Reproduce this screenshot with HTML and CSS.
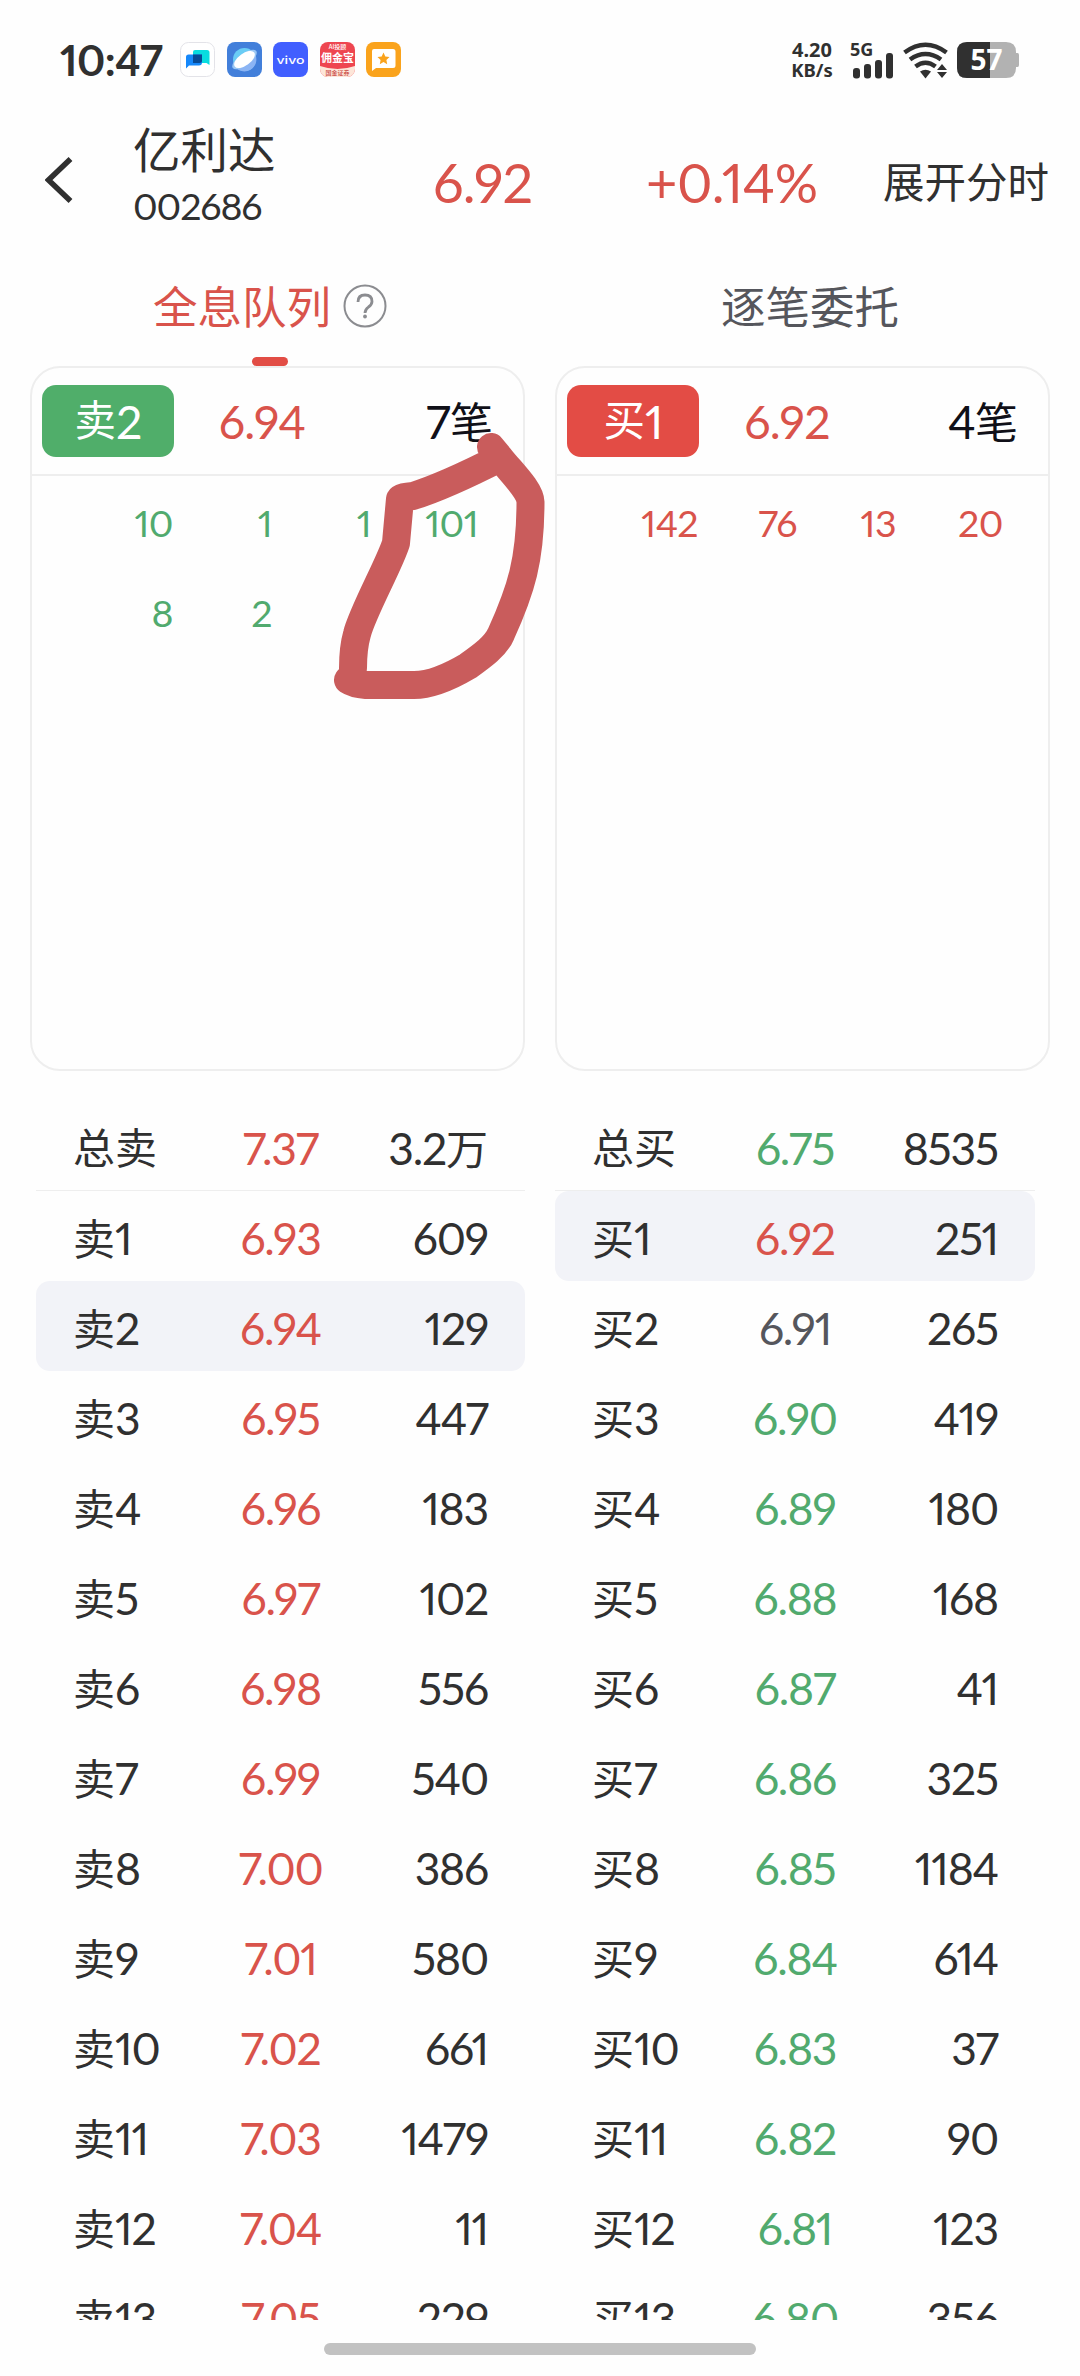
FILE: index.html
```html
<!DOCTYPE html>
<html lang="zh-CN">
<head>
<meta charset="utf-8">
<title>亿利达 002686</title>
<link rel="stylesheet" href="styles.css">
</head>
<body>
<div class="screen">
  <div class="status">
    <div class="clock">10:47</div>
    <div class="apps">
      <svg viewBox="0 0 35 35"><rect x=".5" y=".5" width="34" height="34" rx="8" fill="#fff" stroke="#e3e3e8"/><path d="M15 8h12q2.500 0 2.500 2.500V23l-3-2H13V10q0-2 2-2z" fill="#08dce0"/><path d="M8.500 12.500H22v8q0 3-3 3H9l-3 3V15q0-2.500 2.500-2.500z" fill="#1688fa"/><path d="M13 12.500h9v6q0 2.500-2.500 2.500H13z" fill="#064a96"/></svg>
      <svg viewBox="0 0 35 35"><rect width="35" height="35" rx="8" fill="#427fda"/><circle cx="17.500" cy="17.500" r="11.500" fill="#6acdf5"/><path d="M7 23a11.500 11.500 0 0 0 21-11z" fill="#8bb4f4"/><ellipse cx="17.500" cy="17.500" rx="14.500" ry="6" fill="#9ac7f4" transform="rotate(-36 17.500 17.500)"/><ellipse cx="17.500" cy="17.500" rx="12" ry="6" fill="#fff" transform="rotate(-36 17.500 17.500)"/></svg>
      <svg viewBox="0 0 35 35"><rect width="35" height="35" rx="8" fill="#415fff"/><text x="17.500" y="21.500" class="vivo" textLength="28" lengthAdjust="spacingAndGlyphs">vivo</text></svg>
      <svg viewBox="0 0 35 35"><defs><clipPath id="app"><rect width="35" height="35" rx="8"/></clipPath></defs><g clip-path="url(#app)"><rect width="35" height="35" fill="#ee4650"/><path d="M0 24q17.500 6 35 0v11H0z" fill="#fde6d9"/><text x="17.500" y="6.500" class="mini light">AI投顾</text><text x="17.500" y="20" class="brand">佣金宝</text><text x="17.500" y="32.500" class="mini">国金证券</text></g></svg>
      <svg viewBox="0 0 35 35"><rect width="35" height="35" rx="8" fill="#faa31c"/><path d="M8 7h19q2.500 0 2.500 2.500v14Q29.500 26 27 26H10l-4 3V9q0-2 2-2z" fill="#fff"/><path d="M17.500 10.500l1.800 4 4.200.5-3.100 2.900.8 4.300-3.700-2.200-3.700 2.200.8-4.300-3.100-2.900 4.200-.5z" fill="#faa31c"/></svg>
    </div>
    <div class="rate"><span>4.20</span><span>KB/s</span></div>
    <svg class="signal" viewBox="0 0 42 37"><text x="-1" y="14" class="gen">5G</text><g fill="#303030"><rect x="2" y="26" width="7" height="10.500" rx="3"/><rect x="13" y="22" width="7" height="14.500" rx="3"/><rect x="24" y="18" width="7" height="18.500" rx="3"/><rect x="35" y="11" width="7" height="25.500" rx="3"/></g></svg>
    <svg class="wifi" viewBox="0 0 46 37"><g fill="none" stroke="#303030" stroke-width="4.500"><path d="M1.500 10.500Q22.500-5 43.500 10.500"/><path d="M7 17.500Q22.500 6.500 38 17.500"/><path d="M12.500 24.500Q22.500 17 32.500 24.500"/></g><path d="M17 29.500q5.500-3.500 11 0L22.500 36.500z" fill="#303030"/><path d="M39 22l5 6H34zM39 36l5-6H34z" fill="#303030"/></svg>
    <svg class="battery" viewBox="0 0 63 36"><path d="M10 0h39q10 0 10 10v1h1.500q1.500 0 1.500 2v10q0 2-1.500 2H59v1q0 10-10 10H10Q0 36 0 26V10Q0 0 10 0z" fill="#b2b2b2"/><path d="M33 0H10Q0 0 0 10v16q0 10 10 10h23z" fill="#303030"/><text x="29.500" y="28" class="charge">57</text></svg>
  </div>

  <header class="header">
    <svg class="back" viewBox="0 0 28 46"><path d="M25.500 2L3.500 23l22 21" fill="none" stroke="#303030" stroke-width="5.500"/></svg>
    <div class="stock"><div class="name">亿利达</div><div class="code">002686</div></div>
    <div class="last up">6.92</div>
    <div class="change up">+0.14%</div>
    <div class="expand">展开分时</div>
  </header>

  <nav class="tabs">
    <div class="tab active"><span>全息队列</span><svg class="help" viewBox="0 0 44 44"><circle cx="22" cy="22" r="20.500" fill="none" stroke="#8b8c90" stroke-width="2"/><path d="M15 18q0-7 7-7t7 6.500q0 3-3.500 5.500-3.500 2.700-3.500 6" fill="none" stroke="#8b8c90" stroke-width="2.800"/><circle cx="22" cy="32.500" r="1.900" fill="#8b8c90"/></svg></div>
    <div class="tab"><span>逐笔委托</span></div>
  </nav>

  <section class="cards">
    <div class="card">
      <div class="card-head"><div class="badge sell">卖<b>2</b></div><div class="card-price up">6.94</div><div class="count"><b>7</b>笔</div></div>
      <div class="queue down"><span>10</span><span>1</span><span>1</span><span>101</span><span>8</span><span>2</span></div>
    </div>
    <div class="card">
      <div class="card-head"><div class="badge buy">买<b>1</b></div><div class="card-price up">6.92</div><div class="count"><b>4</b>笔</div></div>
      <div class="queue up"><span>142</span><span>76</span><span>13</span><span>20</span></div>
    </div>
  </section>

  <section class="book">
    <div class="side">
      <div class="row total"><span>总卖</span><b class="up">7.37</b><span class="qty"><b>3.2</b>万</span></div>
      <div class="row"><span>卖<b>1</b></span><b class="up">6.93</b><b class="qty">609</b></div>
      <div class="row selected"><span>卖<b>2</b></span><b class="up">6.94</b><b class="qty">129</b></div>
      <div class="row"><span>卖<b>3</b></span><b class="up">6.95</b><b class="qty">447</b></div>
      <div class="row"><span>卖<b>4</b></span><b class="up">6.96</b><b class="qty">183</b></div>
      <div class="row"><span>卖<b>5</b></span><b class="up">6.97</b><b class="qty">102</b></div>
      <div class="row"><span>卖<b>6</b></span><b class="up">6.98</b><b class="qty">556</b></div>
      <div class="row"><span>卖<b>7</b></span><b class="up">6.99</b><b class="qty">540</b></div>
      <div class="row"><span>卖<b>8</b></span><b class="up">7.00</b><b class="qty">386</b></div>
      <div class="row"><span>卖<b>9</b></span><b class="up">7.01</b><b class="qty">580</b></div>
      <div class="row"><span>卖<b>10</b></span><b class="up">7.02</b><b class="qty">661</b></div>
      <div class="row"><span>卖<b>11</b></span><b class="up">7.03</b><b class="qty">1479</b></div>
      <div class="row"><span>卖<b>12</b></span><b class="up">7.04</b><b class="qty">11</b></div>
      <div class="row"><span>卖<b>13</b></span><b class="up">7.05</b><b class="qty">229</b></div>
    </div>
    <div class="side">
      <div class="row total"><span>总买</span><b class="down">6.75</b><b class="qty">8535</b></div>
      <div class="row selected"><span>买<b>1</b></span><b class="up">6.92</b><b class="qty">251</b></div>
      <div class="row"><span>买<b>2</b></span><b class="flat">6.91</b><b class="qty">265</b></div>
      <div class="row"><span>买<b>3</b></span><b class="down">6.90</b><b class="qty">419</b></div>
      <div class="row"><span>买<b>4</b></span><b class="down">6.89</b><b class="qty">180</b></div>
      <div class="row"><span>买<b>5</b></span><b class="down">6.88</b><b class="qty">168</b></div>
      <div class="row"><span>买<b>6</b></span><b class="down">6.87</b><b class="qty">41</b></div>
      <div class="row"><span>买<b>7</b></span><b class="down">6.86</b><b class="qty">325</b></div>
      <div class="row"><span>买<b>8</b></span><b class="down">6.85</b><b class="qty">1184</b></div>
      <div class="row"><span>买<b>9</b></span><b class="down">6.84</b><b class="qty">614</b></div>
      <div class="row"><span>买<b>10</b></span><b class="down">6.83</b><b class="qty">37</b></div>
      <div class="row"><span>买<b>11</b></span><b class="down">6.82</b><b class="qty">90</b></div>
      <div class="row"><span>买<b>12</b></span><b class="down">6.81</b><b class="qty">123</b></div>
      <div class="row"><span>买<b>13</b></span><b class="down">6.80</b><b class="qty">356</b></div>
    </div>
  </section>
  <div class="home"></div>

  <svg class="scribble" viewBox="320 420 240 290"><path d="M491 447L500 458C512 473 530 490 530.500 502C530.500 560 521 590 501 634C496 646 482 656 468 666Q436 685 414 685H366Q354 684 348 680Q353 676 353 668Q353 648 357 634C362 613 390 563 396 543L400 499Q401 497 413 496Q445 486 500 458"/></svg>
</div>
</body>
</html>
```
FILE: styles.css
```css
* { box-sizing: border-box; }
body { margin: 0; background: #fefefe; }
.screen {
  position: relative;
  width: 1080px;
  height: 2376px;
  overflow: hidden;
  display: flex;
  flex-direction: column;
  color: #303030;
  font: 42px/1 Lato, "Noto Sans CJK SC", sans-serif;
  font-feature-settings: "pnum", "lnum";
  white-space: nowrap;
}
b { font-weight: 400; }
svg { display: block; }
.up { color: #d9534b; }
.down { color: #51aa6e; }
.flat { color: #55565c; }

.status { height: 112px; flex: none; display: flex; align-items: flex-start; padding: 42px 60px 0 60px; }
.clock { width: 120px; font-size: 42.500px; line-height: 35px; font-weight: 700; letter-spacing: -.5px; }
.apps { display: flex; gap: 11.500px; }
.apps svg { width: 35px; height: 35px; }
.vivo { font: 500 11px Inter, sans-serif; fill: #fff; text-anchor: middle; }
.brand { font: 700 11px "Noto Sans CJK SC", sans-serif; fill: #fff; text-anchor: middle; }
.mini { font: 500 6px "Noto Sans CJK SC", sans-serif; fill: #c9463f; text-anchor: middle; }
.mini.light { fill: #fff; }
.rate { margin-left: auto; width: 48px; display: flex; flex-direction: column; align-items: center; font: 700 18.500px/20px "Noto Sans", sans-serif; margin-top: -2px; }
.rate span:first-child { font-size: 20px; }
.signal { width: 42px; height: 37px; margin-left: 15px; overflow: visible; }
.gen { font: 700 18px "Noto Sans", sans-serif; fill: #303030; }
.wifi { width: 46px; height: 37px; margin-left: 10px; }
.battery { width: 63px; height: 36px; margin-left: 8px; overflow: visible; }
.charge { font: 700 28px "Noto Sans", sans-serif; fill: #fff; text-anchor: middle; }

.header { height: 136px; flex: none; display: flex; align-items: center; padding: 0 31px 0 45px; }
.back { width: 28px; height: 46px; }
.stock { width: 300px; margin-left: 60px; padding-bottom: 11px; display: flex; flex-direction: column; gap: 12px; }
.name { font-size: 47.500px; line-height: 50px; }
.code { font-size: 37.500px; line-height: 38px; letter-spacing: -1.100px; }
.last { width: 213px; font-size: 54px; letter-spacing: -.8px; padding-top: 6px; }
.change { flex: 1; font-size: 54px; letter-spacing: -.3px; padding-top: 6px; }
.expand { font-size: 41.500px; padding-top: 5px; }

.tabs { height: 118px; flex: none; display: flex; }
.tab { position: relative; width: 540px; display: flex; justify-content: center; align-items: center; gap: 12px; color: #55565c; font-size: 44.500px; }
.tab.active { color: #d9534b; }
.tab.active::after { content: ""; position: absolute; left: 252px; bottom: 0; width: 36px; height: 9px; border-radius: 4.500px; background: #e24d45; }
.help { width: 44px; height: 44px; margin-top: -2px; }

.cards { flex: none; display: flex; justify-content: space-between; padding: 0 30px; height: 705px; }
.card { width: 495px; border: 2px solid #eee; border-radius: 30px; }
.card-head { height: 108px; border-bottom: 2px solid #eee; display: flex; align-items: center; padding: 0 30px 0 10px; font-size: 43px; color: #101018; }
.badge { width: 132px; height: 72px; border-radius: 14px; display: flex; align-items: center; justify-content: center; color: #fff; font-size: 41.500px; }
.sell { background: #50ae6a; }
.buy { background: #e34c45; }
.card-head b, .card-price { font-size: 46.500px; letter-spacing: -.7px; }
.card-price { width: 176px; text-align: center; }
.count { margin-left: auto; }
.queue { display: grid; grid-template-columns: 141px 99px 99px 107px; grid-auto-rows: 90px; font-size: 37.500px; letter-spacing: -.5px; text-align: right; line-height: 94px; }

.book { height: 1249px; flex: none; overflow: hidden; display: flex; gap: 30px; padding: 30px 45px 0 36px; }
.side { width: 489px; }
.side + .side { width: 480px; }
.row { height: 90px; display: grid; grid-template-columns: 1fr 1fr 1fr; align-items: center; padding: 5px 37px 0; border-radius: 14px; font-size: 42px; }
.row b { font-size: 44.500px; letter-spacing: -1.200px; }
.row > b { text-align: center; }
.row > .qty { text-align: right; }
.total { border-bottom: 1px solid #eee; border-radius: 0; }
.selected { background: #f2f3f8; }
.home { align-self: center; margin-top: 23px; width: 432px; height: 12px; border-radius: 6px; background: #c2c2c2; }

.scribble { position: absolute; left: 320px; top: 420px; width: 240px; height: 290px; }
.scribble path { fill: none; stroke: #c95c5c; stroke-width: 28px; stroke-linecap: round; stroke-linejoin: round; }
```
